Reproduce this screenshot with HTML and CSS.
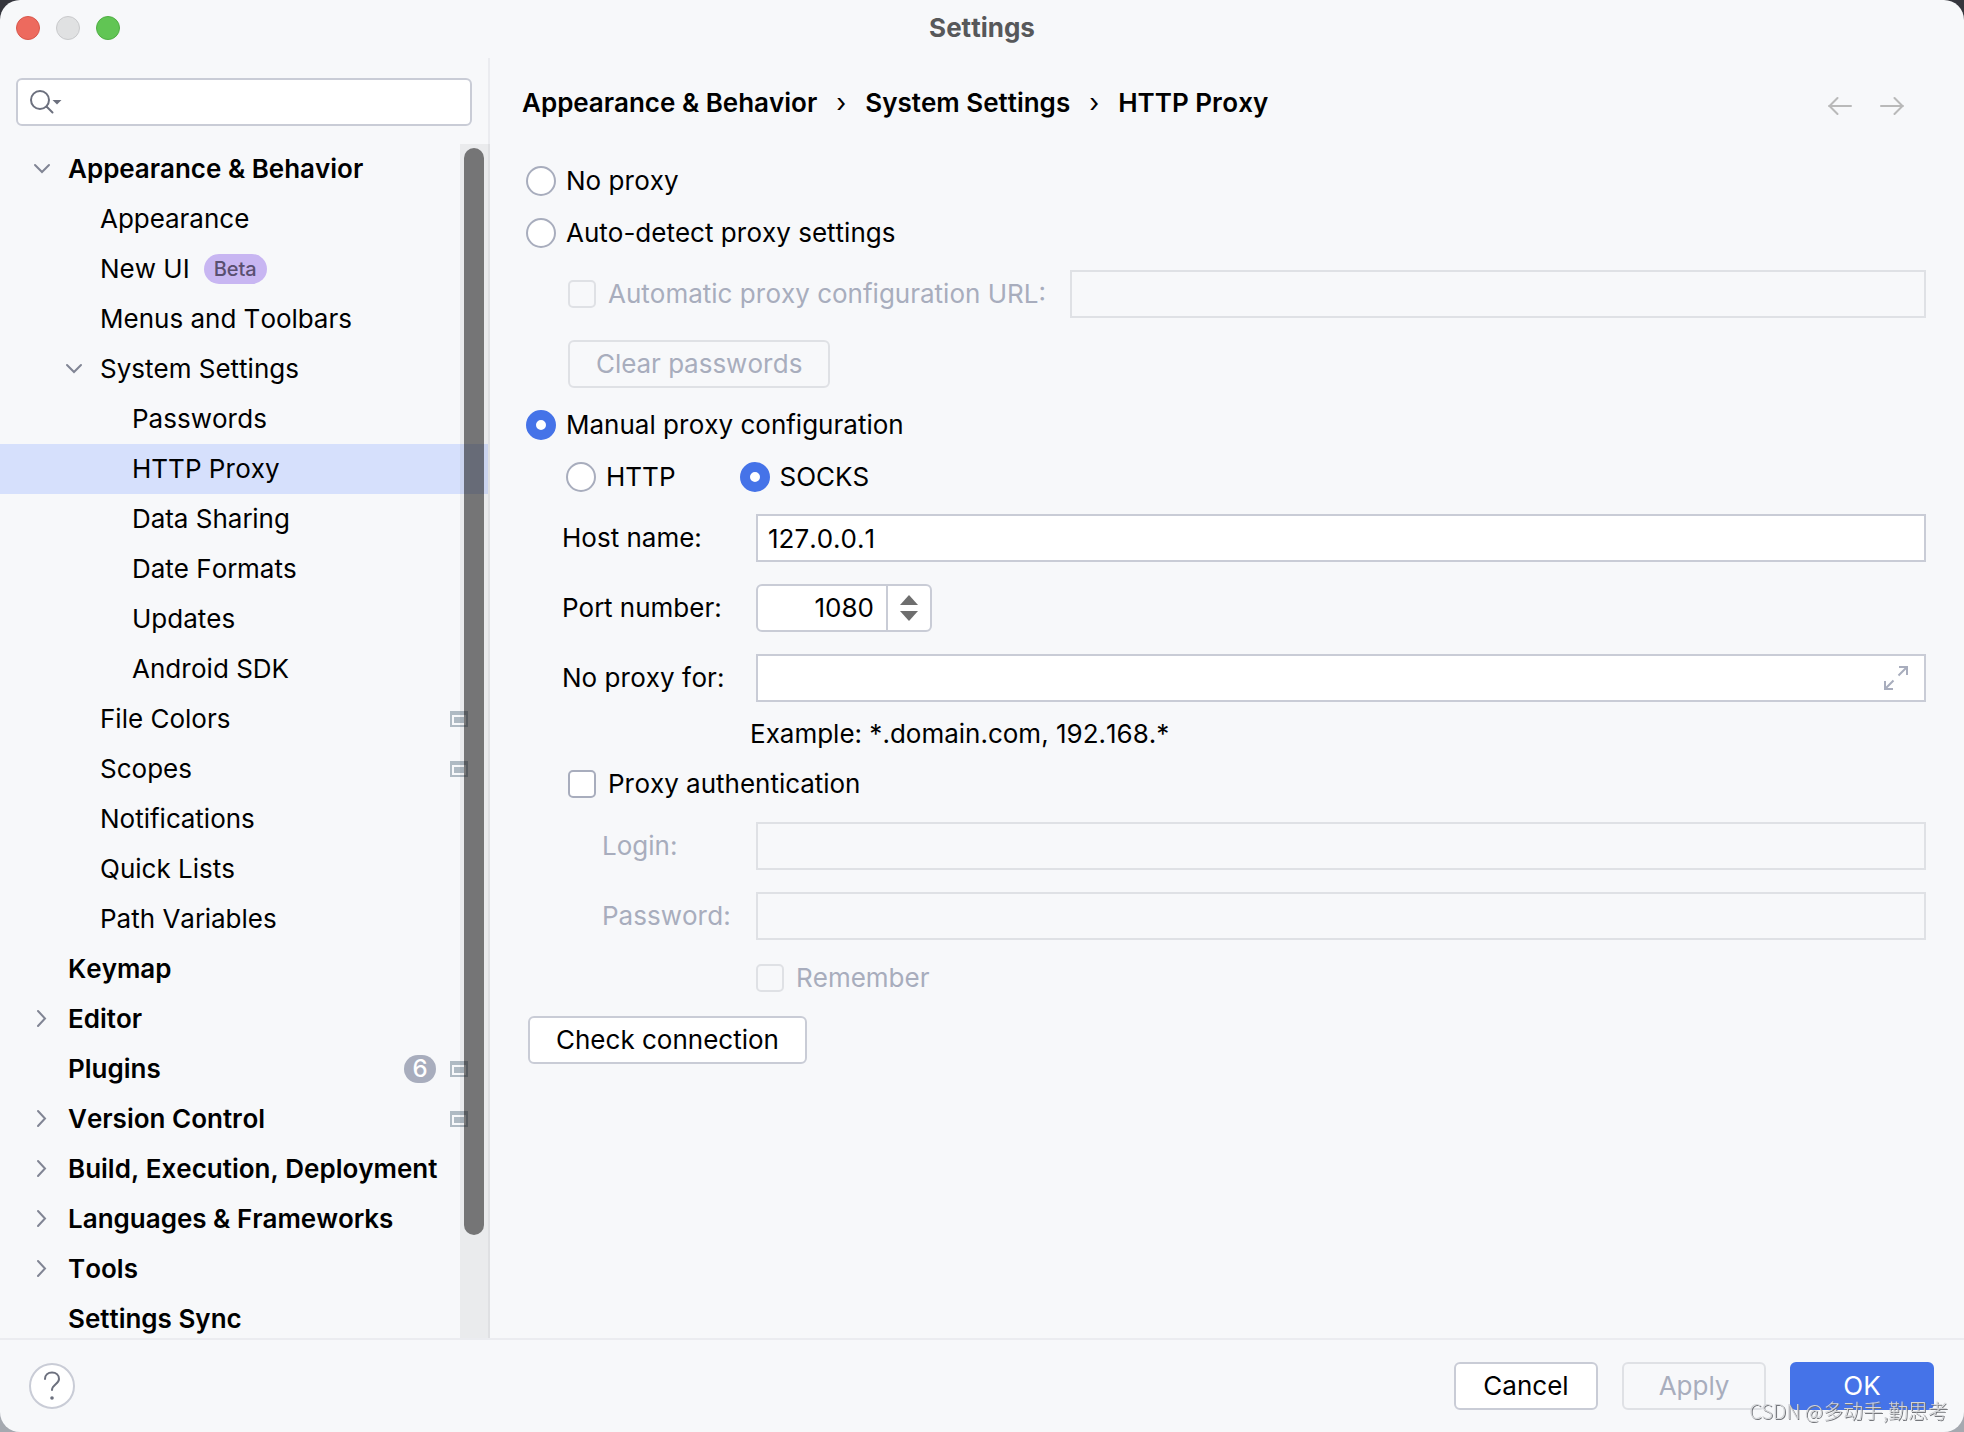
FILE: index.html
```html
<!DOCTYPE html>
<html lang="en">
<head>
<meta charset="utf-8">
<title>Settings</title>
<link rel="stylesheet" href="styles.css">
</head>
<body>
<svg class="defs" aria-hidden="true">
  <symbol id="down" viewBox="0 0 24 24"><path d="M5 8l7 7 7-7" fill="none" stroke="#818594" stroke-width="2" stroke-linecap="round"/></symbol>
  <symbol id="right" viewBox="0 0 24 24"><path d="M8 4l7 7.500-7 7.500" fill="none" stroke="#818594" stroke-width="2" stroke-linecap="round"/></symbol>
  <symbol id="project" viewBox="0 0 18 16"><path d="M0 0h18v16H0zM2 4v10h14V4zM4 6h10v6H4z" fill="#afbac3" fill-rule="evenodd"/></symbol>
</svg>
<div class="window">
  <header class="titlebar">
    <div class="lights">
      <button class="light close" aria-label="Close"></button>
      <button class="light minimize" aria-label="Minimize" disabled></button>
      <button class="light zoom" aria-label="Zoom"></button>
    </div>
    <h1 class="title">Settings</h1>
  </header>

  <div class="content">
    <aside class="sidebar">
      <label class="search">
        <svg width="34" height="26" viewBox="0 0 34 26" aria-hidden="true"><circle cx="10" cy="11" r="9" fill="none" stroke="#6c707e" stroke-width="2"/><path d="M16.500 17.500l6 6" stroke="#6c707e" stroke-width="2" stroke-linecap="round"/><path d="M22.500 11h9l-4.500 4.500z" fill="#6c707e"/></svg>
        <input class="search-input" type="text" aria-label="Search settings">
      </label>
      <nav class="tree">
        <ul>
          <li><a class="row top" href="#"><svg class="chevron"><use href="#down"/></svg>Appearance &amp; Behavior</a>
            <ul>
              <li><a class="row sub" href="#">Appearance</a></li>
              <li><a class="row sub" href="#">New UI<span class="beta">Beta</span></a></li>
              <li><a class="row sub" href="#">Menus and Toolbars</a></li>
              <li><a class="row sub open" href="#"><svg class="chevron"><use href="#down"/></svg>System Settings</a>
                <ul>
                  <li><a class="row leaf" href="#">Passwords</a></li>
                  <li><a class="row leaf selected" href="#">HTTP Proxy</a></li>
                  <li><a class="row leaf" href="#">Data Sharing</a></li>
                  <li><a class="row leaf" href="#">Date Formats</a></li>
                  <li><a class="row leaf" href="#">Updates</a></li>
                  <li><a class="row leaf" href="#">Android SDK</a></li>
                </ul>
              </li>
              <li><a class="row sub" href="#">File Colors<span class="marks"><svg class="project"><use href="#project"/></svg></span></a></li>
              <li><a class="row sub" href="#">Scopes<span class="marks"><svg class="project"><use href="#project"/></svg></span></a></li>
              <li><a class="row sub" href="#">Notifications</a></li>
              <li><a class="row sub" href="#">Quick Lists</a></li>
              <li><a class="row sub" href="#">Path Variables</a></li>
            </ul>
          </li>
          <li><a class="row top flat" href="#">Keymap</a></li>
          <li><a class="row top" href="#"><svg class="chevron"><use href="#right"/></svg>Editor</a></li>
          <li><a class="row top flat" href="#">Plugins<span class="marks"><span class="count">6</span><svg class="project"><use href="#project"/></svg></span></a></li>
          <li><a class="row top" href="#"><svg class="chevron"><use href="#right"/></svg>Version Control<span class="marks"><svg class="project"><use href="#project"/></svg></span></a></li>
          <li><a class="row top" href="#"><svg class="chevron"><use href="#right"/></svg>Build, Execution, Deployment</a></li>
          <li><a class="row top" href="#"><svg class="chevron"><use href="#right"/></svg>Languages &amp; Frameworks</a></li>
          <li><a class="row top" href="#"><svg class="chevron"><use href="#right"/></svg>Tools</a></li>
          <li><a class="row top flat" href="#">Settings Sync</a></li>
        </ul>
        <div class="scrollbar"><div class="thumb"></div></div>
      </nav>
    </aside>

    <main class="main">
      <div class="heading">
        <nav class="crumbs">
          <a href="#">Appearance &amp; Behavior</a><span class="sep">›</span><a href="#">System Settings</a><span class="sep">›</span><a href="#">HTTP Proxy</a>
        </nav>
        <div class="history">
          <button class="arrow" aria-label="Back" disabled><svg width="24" height="24" viewBox="0 0 24 24"><path d="M23 15H1M9.500 7L1.500 15l8 8" fill="none" stroke="#b9b9b9" stroke-width="2" stroke-linecap="round"/></svg></button>
          <button class="arrow" aria-label="Forward" disabled><svg width="24" height="24" viewBox="0 0 24 24"><path d="M1 15h22M14.500 7l8 8-8 8" fill="none" stroke="#b9b9b9" stroke-width="2" stroke-linecap="round"/></svg></button>
        </div>
      </div>

      <form class="form">
        <label class="choice"><input class="radio" type="radio" name="mode">No proxy</label>
        <label class="choice"><input class="radio" type="radio" name="mode">Auto-detect proxy settings</label>
        <div class="auto">
          <div class="field">
            <label class="check disabled"><input class="box" type="checkbox" disabled>Automatic proxy configuration URL:</label>
            <input class="text" type="text" aria-label="Automatic proxy configuration URL" disabled>
          </div>
          <button class="button" type="button" disabled>Clear passwords</button>
        </div>
        <label class="choice"><input class="radio" type="radio" name="mode" checked>Manual proxy configuration</label>
        <div class="kinds">
          <label class="choice"><input class="radio" type="radio" name="kind">HTTP</label>
          <label class="choice"><input class="radio" type="radio" name="kind" checked>SOCKS</label>
        </div>
        <div class="fields">
          <label for="host">Host name:</label>
          <input class="text" id="host" type="text" value="127.0.0.1">
          <label for="port">Port number:</label>
          <div class="spinner">
            <input class="port" id="port" type="text" inputmode="numeric" value="1080">
            <div class="steps">
              <button type="button" class="step" aria-label="Increase"><svg width="18" height="10" viewBox="0 0 18 10"><path d="M0 10L9 0l9 10z" fill="#6e6e6e"/></svg></button>
              <button type="button" class="step" aria-label="Decrease"><svg width="18" height="10" viewBox="0 0 18 10"><path d="M0 0l9 10 9-10z" fill="#6e6e6e"/></svg></button>
            </div>
          </div>
          <label for="bypass">No proxy for:</label>
          <div class="text expandable">
            <input class="bare" id="bypass" type="text">
            <button type="button" class="expand" aria-label="Expand"><svg width="24" height="24" viewBox="0 0 24 24"><path d="M15 1h8v8M22 2l-7.500 7.500M1 15v8h8M2 22l7.500-7.500" fill="none" stroke="#a8adbd" stroke-width="2"/></svg></button>
          </div>
        </div>
        <p class="example">Example: *.domain.com, 192.168.*</p>
        <label class="check auth"><input class="box" type="checkbox">Proxy authentication</label>
        <div class="fields login">
          <label class="disabled" for="user">Login:</label>
          <input class="text" id="user" type="text" disabled>
          <label class="disabled" for="pass">Password:</label>
          <input class="text" id="pass" type="password" disabled>
        </div>
        <label class="check remember disabled"><input class="box" type="checkbox" disabled>Remember</label>
        <button class="button test" type="button">Check connection</button>
      </form>
    </main>
  </div>

  <footer class="footer">
    <button class="help" aria-label="Help"><svg width="18" height="30" viewBox="0 0 18 30"><path d="M2 8C2 4 5 1.500 9 1.500S16 4 16 8c0 5-7 5.500-7 11" fill="none" stroke="#6c707e" stroke-width="2" stroke-linecap="round"/><circle cx="9" cy="27" r="1.800" fill="#6c707e"/></svg></button>
    <div class="actions">
      <button class="button">Cancel</button>
      <button class="button" disabled>Apply</button>
      <button class="button primary">OK</button>
    </div>
  </footer>
</div>
<div class="watermark">CSDN @多动手,勤思考</div>
</body>
</html>
```

FILE: styles.css
```css
* { box-sizing: border-box; }

body {
  margin: 0;
  background: linear-gradient(#35363d 50%, #a5a9b0 50%);
  font: 26px/32px Inter, "Liberation Sans", sans-serif;
  font-kerning: none;
  color: #000;
}

input, button { font: inherit; font-kerning: inherit; color: inherit; margin: 0; }
button { padding: 0; border: 0; background: none; }
a { color: inherit; text-decoration: none; }
ul { list-style: none; margin: 0; padding: 0; }
svg { display: block; flex: none; }
.defs { position: absolute; width: 0; height: 0; }

.window {
  display: flex;
  flex-direction: column;
  height: 100vh;
  overflow: hidden;
  background: #f7f8fa;
  border-radius: 20px;
}

/* Title bar */
.titlebar {
  display: grid;
  grid-template-columns: 1fr auto 1fr;
  align-items: center;
  height: 56px;
  margin-bottom: 2px;
  padding: 0 16px;
}
.lights { display: flex; gap: 16px; }
.light { width: 24px; height: 24px; border-radius: 50%; border: 1px solid; }
.close { background: #ed6a5e; border-color: #d8574b; }
.minimize { background: #e0e1e2; border-color: #c8c9cb; }
.zoom { background: #61c554; border-color: #4fae43; }
.title { margin: 0; font-size: 26px; font-weight: 700; color: #57585a; }

.content { flex: 1; display: flex; min-height: 0; }

/* Sidebar */
.sidebar {
  display: flex;
  flex-direction: column;
  flex: none;
  width: 490px;
  padding-top: 20px;
  border-right: 2px solid #ebecf0;
}
.search {
  display: flex;
  align-items: center;
  flex: none;
  height: 48px;
  margin: 0 16px 18px;
  padding-left: 12px;
  background: #fff;
  border: 2px solid #c9ccd6;
  border-radius: 6px;
}
.search-input { flex: 1; min-width: 0; border: 0; outline: 0; background: none; }
.tree { position: relative; flex: 1; min-height: 0; overflow: hidden; margin-right: -2px; padding-right: 2px; }
.row { display: flex; align-items: center; height: 50px; padding-right: 20px; white-space: nowrap; }
.top { padding-left: 30px; font-weight: 600; }
.top.flat { padding-left: 68px; }
.sub { padding-left: 100px; }
.sub.open { padding-left: 62px; }
.leaf { padding-left: 132px; }
.selected { background: #d6e0fc; }
.chevron { width: 24px; height: 24px; margin-right: 14px; }
.beta {
  height: 30px;
  margin-left: 14px;
  padding: 0 10px;
  border-radius: 15px;
  background: #c8b6f2;
  color: #5a4f70;
  font-size: 20px;
  font-weight: 500;
  line-height: 30px;
}
.marks { display: flex; align-items: center; gap: 14px; margin-left: auto; }
.project { width: 18px; height: 16px; }
.count {
  width: 32px;
  height: 28px;
  border-radius: 14px;
  background: #a8adbd;
  color: #fff;
  font-size: 24px;
  font-weight: 500;
  line-height: 28px;
  text-align: center;
}
.scrollbar {
  position: absolute;
  inset: 0 0 0 auto;
  display: grid;
  grid-template-rows: 11fr 1fr;
  width: 30px;
  padding: 4px 6px 4px 4px;
  background: rgba(0, 0, 0, .05);
}
.thumb { border-radius: 10px; background: rgba(25, 25, 25, .56); }

/* Page */
.main { flex: 1; min-width: 0; padding: 0 38px 0 32px; }
.heading { display: flex; align-items: center; justify-content: space-between; height: 90px; margin-bottom: 7px; }
.crumbs { display: flex; font-weight: 600; }
.sep { width: 48px; font-weight: 400; text-align: center; }
.history { display: flex; gap: 28px; padding-right: 22px; }

.choice { display: flex; align-items: center; gap: 10px; height: 52px; padding-left: 4px; }
.radio {
  appearance: none;
  width: 30px;
  height: 30px;
  border: 2px solid #a8adbd;
  border-radius: 50%;
  background: #fff;
}
.radio:checked { border: 10px solid #4573e8; }
.check { display: flex; align-items: center; gap: 12px; }
.box {
  appearance: none;
  width: 28px;
  height: 28px;
  border: 2px solid #a8adbd;
  border-radius: 5px;
  background: #fff;
}
.disabled { color: #a8adbd; }
.box:disabled { border-color: #dfe1e5; background: none; }

.text {
  width: 100%;
  min-width: 0;
  height: 48px;
  padding: 0 10px;
  border: 2px solid #c9ccd6;
  background: #fff;
}
.text:disabled { border-color: #dfe1e5; background: none; }

.auto { padding: 11px 0 11px 46px; }
.field { display: flex; align-items: center; gap: 24px; margin-bottom: 22px; }
.field .check { flex: none; }
.field .text { flex: 1; }
.kinds { display: flex; gap: 60px; padding-left: 40px; }

.fields {
  display: grid;
  grid-template-columns: 194px 1fr;
  row-gap: 22px;
  align-items: center;
  padding: 11px 0 0 40px;
}
.spinner {
  display: flex;
  width: 176px;
  height: 48px;
  border: 2px solid #c9ccd6;
  border-radius: 6px;
  background: #fff;
}
.port { width: 128px; padding: 0 12px; border: 0; background: none; text-align: right; }
.steps { flex: 1; display: flex; flex-direction: column; justify-content: center; gap: 6px; border-left: 2px solid #c9ccd6; }
.step { display: flex; justify-content: center; }
.expandable { display: flex; align-items: center; padding-right: 16px; }
.bare { flex: 1; min-width: 0; border: 0; background: none; }

.example { margin: 16px 0 12px 228px; }
.auth { height: 44px; padding-left: 46px; }
.login { grid-template-columns: 154px 1fr; padding: 16px 0 16px 80px; }
.remember { height: 44px; padding-left: 234px; }

.button {
  min-width: 144px;
  height: 48px;
  padding: 0 26px;
  border: 2px solid #c9ccd6;
  border-radius: 6px;
  background: #fff;
}
.button:disabled { border-color: #dfe1e5; background: none; color: #a8adbd; }
.primary { border-color: #4573e8; background: #4573e8; color: #fff; }
.test { margin: 16px 0 0 6px; }

/* Footer */
.footer {
  display: flex;
  align-items: center;
  justify-content: space-between;
  height: 94px;
  padding: 0 30px 0 29px;
  border-top: 2px solid #ebecf0;
}
.help {
  display: flex;
  align-items: center;
  justify-content: center;
  width: 46px;
  height: 46px;
  border: 2px solid #c9ccd6;
  border-radius: 50%;
  background: #fff;
}
.actions { display: flex; gap: 24px; }

.watermark {
  position: fixed;
  right: 16px;
  bottom: 6px;
  color: #d4d5d8;
  font: 300 20px/30px "Noto Sans CJK SC", sans-serif;
  text-shadow: 1px 1px 0 #74767b;
}
```
